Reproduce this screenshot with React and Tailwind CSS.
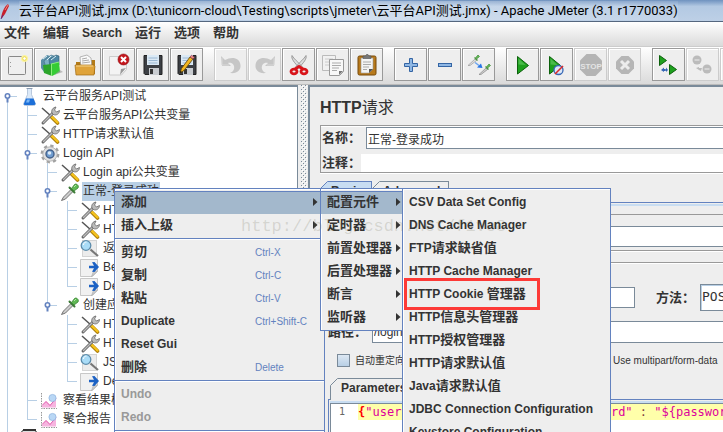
import React from "react";

const CJK = /([\u3000-\u9fff\uff00-\uffef]+)/;

/* Splits a label so that Chinese runs get the larger menu size. */
function Label({ children }) {
  return children.split(CJK).map((part, i) =>
    CJK.test(part) ? (
      <span key={i} className="text-[13px]">{part}</span>
    ) : (
      <React.Fragment key={i}>{part}</React.Fragment>
    )
  );
}

/* ---------- toolbar icons ---------- */

const Svg = ({ children, size = 24 }) => (
  <svg width={size} height={size} viewBox={`0 0 ${size} ${size}`} aria-hidden="true">
    {children}
  </svg>
);

const NewIcon = () => (
  <Svg>
    <rect x="3.5" y="3.500" width="17" height="18" rx="1" fill="#efefef" stroke="#888" />
    <path d="M5.500 9v8" stroke="#999" strokeDasharray="1 3" />
    <circle cx="19.500" cy="5.500" r="3.500" fill="#fbf3a0" />
    <circle cx="19.500" cy="5.500" r="1.800" fill="#fff" stroke="#ecd94c" />
  </Svg>
);
const TemplatesIcon = () => (
  <Svg>
    <path d="M2 7l6-5 3 1v13l-6 3-3-4z" fill="#5b8fa8" />
    <path d="M5 8l7-6 3 1v12l-7 3z" fill="#7cb0c6" stroke="#3f6f88" strokeWidth=".6" />
    <path d="M10 6l7-4 3 1v9l-9 3z" fill="#4d87a3" stroke="#2f5c74" strokeWidth=".6" />
    <path d="M4 6l4-3M8 7l4-4M12 7l5-4" stroke="#d9edf5" />
    <path d="M4 12l9-1v12l-8-3z" fill="#2ba52b" />
    <path d="M12 11l8-2 1 10-8 4z" fill="#35cc35" />
    <path d="M12 11l8-2M12.500 11v12" stroke="#8bee7c" />
    <path d="M21 17l3 2-9 3z" fill="#999" opacity=".6" />
  </Svg>
);
const OpenIcon = () => (
  <Svg>
    <path d="M3 9h6l2-2h11v14H3z" fill="#b27a18" />
    <path d="M7 4l7-2 4 3 1 10H8z" fill="#fafafa" stroke="#999" strokeWidth=".7" />
    <path d="M9 6l5-1M9 8l7-1M9 10l8-1" stroke="#aaa" />
    <path d="M2 12h19l1 1-1 9H3z" fill="#dfa33a" stroke="#a26c14" strokeWidth=".7" />
    <path d="M3 13h17" stroke="#f6d48b" />
  </Svg>
);
const CloseIcon = () => (
  <Svg>
    <path d="M2.500 3.500h17v13l-5 5.500h-12z" fill="#f3f3f3" stroke="#ccc" />
    <path d="M19 15l-6 7 1-6z" fill="#999" />
    <circle cx="16.500" cy="6.500" r="5.500" fill="#c4161c" stroke="#8d0d12" strokeWidth=".6" />
    <path d="M14 4l5 5M19 4l-5 5" stroke="#fff" strokeWidth="2" />
  </Svg>
);
const Floppy = () => (
  <>
    <path d="M3 2.500h18v19H4l-1-1z" fill="#3c3f44" stroke="#222" />
    <rect x="6" y="2" width="12" height="10" fill="#dbe9f5" />
    <path d="M7.500 5h9M7.500 7.500h9M7.500 10h9" stroke="#9bb8d3" />
    <rect x="8" y="15" width="10" height="7" fill="#c9ccd0" />
    <rect x="9" y="16" width="3" height="5" fill="#333" />
  </>
);
const SaveIcon = () => <Svg><Floppy /></Svg>;
const SaveAsIcon = () => (
  <Svg>
    <Floppy />
    <path d="M5 20l1.500-4.500L15 4l3 2L9 17.500z" fill="#f2b51e" stroke="#5c4308" strokeWidth=".8" />
    <path d="M15 4l1.500-1.800 3 2L18 6z" fill="#e9908a" stroke="#713" strokeWidth=".5" />
    <path d="M5 20l.5-2 1.500 1z" fill="#111" />
  </Svg>
);
const UndoIcon = () => (
  <Svg>
    <path d="M2 3l1 10h9l-3-3c4-1 7 2 6 6-.5 2-2 3-4 4 7 1 11-3 10.500-8C21 5 13 3 6 7z" fill="#c6c6c6" />
    <path d="M3 5v7h7" stroke="#d8d8d8" fill="none" />
  </Svg>
);
const RedoIcon = () => (
  <Svg>
    <path d="M22 3l-1 10h-9l3-3c-4-1-7 2-6 6 .5 2 2 3 4 4-7 1-11-3-10.500-8C3 5 11 3 18 7z" fill="#c6c6c6" />
    <path d="M21 5v7h-7" stroke="#d8d8d8" fill="none" />
  </Svg>
);
const CutIcon = () => (
  <Svg>
    <path d="M5 2.500c-1 3 2 7 8 13l2-2C11 9 7 6 5 2.500zM19 2.500c1 3-2 7-8 13l-2-2C13 9 17 6 19 2.500z" fill="#ddd" stroke="#888" strokeWidth=".8" />
    <ellipse cx="7" cy="18.500" rx="3" ry="2.300" fill="none" stroke="#d8141a" strokeWidth="2.800" />
    <ellipse cx="17" cy="18.500" rx="3" ry="2.300" fill="none" stroke="#d8141a" strokeWidth="2.800" />
    <path d="M8 16l4-2.500 4 2.500" stroke="#d8141a" strokeWidth="2.800" fill="none" />
  </Svg>
);
const CopyIcon = () => (
  <Svg>
    <path d="M1.500 2.500h13v15h-13z" fill="#f1f1f1" stroke="#bbb" />
    <path d="M4 6h8M4 9h4M4 12h4" stroke="#ccc" />
    <path d="M8.500 6.500h14v12l-4 4h-10z" fill="#f8f8f8" stroke="#999" />
    <path d="M11 10h9M11 12.500h9M11 15h7M11 17.500h5" stroke="#aaa" />
    <path d="M22 18l-4 4v-4z" fill="#777" />
  </Svg>
);
const PasteIcon = () => (
  <Svg>
    <rect x="3" y="3" width="18" height="19" rx="1.500" fill="#b87a1c" stroke="#76490a" />
    <path d="M6 5h12v11l-4 4H6z" fill="#f4f4f4" stroke="#999" strokeWidth=".6" />
    <path d="M8 5.500V3h2.500l1-1.500h1.500L14 3h2v2.500z" fill="#777" stroke="#555" strokeWidth=".6" />
    <path d="M8 9h8M8 11.500h8M8 14h6M8 16.500h4" stroke="#aaa" />
    <path d="M18 16l-4 4v-4z" fill="#555" />
  </Svg>
);
const PlusIcon = () => (
  <Svg>
    <path d="M10.500 5.500h3v5h5v3h-5v5h-3v-5h-5v-3h5z" fill="#8fb7e4" stroke="#3465a4" />
  </Svg>
);
const MinusIcon = () => (
  <Svg>
    <rect x="5.500" y="10.500" width="13" height="3" fill="#8fb7e4" stroke="#3465a4" />
  </Svg>
);
const ToggleIcon = () => (
  <Svg>
    <path d="M1 12.500l7-6.500 1.500 1.500L3 12.500z" fill="#ddd" stroke="#999" strokeWidth=".7" />
    <path d="M7.500 4.500l3 3" stroke="#4a9440" strokeWidth="1.200" />
    <path d="M8.500 5l2.500-3 1.500 1.500-3 2.500z" fill="#66b95c" stroke="#4a9440" strokeWidth=".8" />
    <path d="M12 21.500l7-6.500 1.500 1.500-6.500 5z" fill="#ccc" stroke="#888" strokeWidth=".7" />
    <path d="M18.500 13.500l3 3" stroke="#4a9440" strokeWidth="1.200" />
    <path d="M19.500 14l2.500-3 1.500 1.500-3 2.500z" fill="#66b95c" stroke="#4a9440" strokeWidth=".8" />
    <path d="M8 9.500l4 3" stroke="#6ba4f0" strokeWidth="1.500" />
    <path d="M15.500 15l-5.500-.5 4-4z" fill="#2574e6" />
  </Svg>
);
const StartIcon = () => (
  <Svg>
    <path d="M6.500 3.500v17.500l11-8.500z" fill="#1ea01e" stroke="#0c610c" />
    <path d="M7.500 5.500v6l7 .5z" fill="#4aba4a" />
  </Svg>
);
const StartNoTimersIcon = () => (
  <Svg>
    <path d="M4.500 3.500v17.500l11-8.500z" fill="#1ea01e" stroke="#0c610c" />
    <path d="M5.500 5.500v6l7 .5z" fill="#4aba4a" />
    <circle cx="13.500" cy="17" r="4.500" fill="#dbe6f6" stroke="#3566b5" strokeWidth="1.300" />
    <path d="M10 21l8-8" stroke="#d92b2b" strokeWidth="1.600" />
  </Svg>
);
const StopIcon = () => (
  <Svg>
    <path d="M7.500 1h9L23 7.500v9L16.500 23h-9L1 16.500v-9z" fill="#b4b4b4" />
    <text x="12" y="15.500" textAnchor="middle" fontSize="8" fontWeight="bold" fontFamily="Liberation Sans, sans-serif" fill="#e4e4e4">STOP</text>
  </Svg>
);
const ShutdownIcon = () => (
  <Svg>
    <path d="M8.500 3h7L21 8.500v7L15.500 21h-7L3 15.500v-7z" fill="#b6b6b6" />
    <path d="M8 8l8 8M16 8l-8 8" stroke="#ececec" strokeWidth="3" />
  </Svg>
);
const RemoteStartIcon = () => (
  <Svg>
    <path d="M2.500 2.500v10l7-5z" fill="#1ea01e" stroke="#0c610c" />
    <path d="M12.500 11.500v10l7-5z" fill="#1ea01e" stroke="#0c610c" />
    <path d="M4 17l3-2.500v1.500h1v2H7V19zM11 17l-2-2.500V19z" fill="#3566b5" />
    <path d="M7 17h3" stroke="#3566b5" strokeWidth="1.500" />
  </Svg>
);
const RemoteStopIcon = () => (
  <Svg>
    <circle cx="6" cy="7" r="4.500" fill="#bbb" />
    <circle cx="16" cy="16" r="4.500" fill="#bbb" />
    <path d="M3.500 7h5M13.500 16h5" stroke="#ddd" strokeWidth="1.500" />
    <path d="M5 15l3-1v1h3l-1 3-2-1z" fill="#bbb" />
  </Svg>
);

const TOOLBAR = [
  [
    ["New", NewIcon], ["Templates", TemplatesIcon], ["Open", OpenIcon],
    ["Close", CloseIcon], ["Save", SaveIcon], ["Save as", SaveAsIcon],
  ],
  [
    ["Undo", UndoIcon, true], ["Redo", RedoIcon, true], ["Cut", CutIcon],
    ["Copy", CopyIcon], ["Paste", PasteIcon],
  ],
  [["Expand all", PlusIcon], ["Collapse all", MinusIcon], ["Toggle", ToggleIcon]],
  [
    ["Start", StartIcon], ["Start no pauses", StartNoTimersIcon],
    ["Stop", StopIcon, true], ["Shutdown", ShutdownIcon, true],
  ],
  [["Remote start all", RemoteStartIcon], ["Remote stop all", RemoteStopIcon, true], ["Remote shutdown all", RemoteStopIcon, true]],
];

/* ---------- tree icons ---------- */

const FlaskIcon = () => (
  <Svg size={20}>
    <path d="M7.500 1.500h4v6l4 9.500c0 1-1 1.500-2 1.500h-8c-1 0-2-.5-2-1.500l4-9.500z" fill="#dbe9f8" stroke="#a9bdd6" strokeWidth=".8" />
    <path d="M6 11.500h7.500l2 5c0 1-1 1.500-2 1.500h-8c-1 0-2-.5-1.500-1.500z" fill="#1c6fd8" />
    <path d="M7 12.500h3l-1 3H6z" fill="#78b5f5" />
    <path d="M6.500 1.500h6" stroke="#8a9bb0" />
  </Svg>
);
const ToolsIcon = () => (
  <Svg size={20}>
    <path d="M2 2l9 8" stroke="#555" strokeWidth="1.500" />
    <path d="M11 10.500l6.500 6.500" stroke="#a87a08" strokeWidth="3.600" strokeLinecap="round" />
    <path d="M11 10l6.500 6.500" stroke="#f5c21c" strokeWidth="2.400" strokeLinecap="round" />
    <path d="M3 17L13 7" stroke="#666" strokeWidth="3" strokeLinecap="round" />
    <path d="M3.500 16.500L13 7" stroke="#bbb" strokeWidth="1.400" strokeLinecap="round" />
    <path d="M12 7c-1-3 1-5.500 4-6l-1.500 3 2 2 3-1.500c0 3-3 5.500-6 4z" fill="#bbb" stroke="#666" strokeWidth=".8" />
  </Svg>
);
const GearIcon = () => (
  <Svg size={20}>
    <circle cx="10" cy="10" r="8" fill="none" stroke="#a2a2a2" strokeWidth="2.800" strokeDasharray="3.200 3.083" />
    <circle cx="10" cy="10" r="7.200" fill="#e0e0e0" stroke="#aaa" strokeWidth=".8" />
    <circle cx="10" cy="10" r="4" fill="#6f9ccf" stroke="#44618a" strokeWidth="1.400" />
    <circle cx="9.500" cy="9" r="1.800" fill="#dceaf8" />
  </Svg>
);
const DropperIcon = () => (
  <Svg size={20}>
    <path d="M1.500 18.500l2-3.500L11 7.500l2 2L5.500 17z" fill="#ccc" stroke="#666" strokeWidth=".9" />
    <path d="M9.500 5.500l5 5" stroke="#3b7a36" strokeWidth="2" strokeLinecap="round" />
    <path d="M11.500 6.500l3-4c1.500-1.500 5 1 3.500 3.500l-4 3z" fill="#5fb954" stroke="#3b8433" strokeWidth=".8" />
    <path d="M14 5l2-2" stroke="#b2e6a8" />
  </Svg>
);
const LensIcon = () => (
  <Svg size={20}>
    <rect x="2.500" y="1.500" width="14" height="16" fill="#ececec" stroke="#ccc" strokeWidth=".8" />
    <path d="M10.500 10.500l7.500 6.500" stroke="#777" strokeWidth="2.200" />
    <circle cx="6" cy="6.500" r="4.800" fill="#a9dcf7" stroke="#5d8cab" strokeWidth="1.300" />
    <path d="M3.500 6c0-2 1.500-3 3-3" stroke="#fff" fill="none" />
  </Svg>
);
const PostIcon = () => (
  <Svg size={20}>
    <path d="M.5 1.500h17v12l-5 5H.5z" fill="#f1f1f1" stroke="#bbb" strokeWidth=".8" />
    <path d="M17.500 13l-6 5.500 2-5z" fill="#ccc" stroke="#aaa" strokeWidth=".6" />
    <path d="M9 7.800h5l-2-3.500 2.500-.3 4.500 5-4.500 5-2.500-.3 2-3.500H9z" fill="#1d62c4" />
  </Svg>
);
const GraphIcon = () => (
  <Svg size={20}>
    <path d="M2 16.500V15l4-5 4 4 6-7v9.500z" fill="#f6b4df" />
    <path d="M2 14.500l4-4 4 4 6-7" stroke="#e25bad" fill="none" />
    <circle cx="12.500" cy="7" r="3.600" fill="#b9d7f5" stroke="#8ab0dc" strokeWidth=".7" />
    <path d="M1.500 2v15.500H17" stroke="#999" strokeDasharray="1.500 1" fill="none" />
  </Svg>
);
const BenchIcon = () => (
  <Svg size={20}>
    <rect x="1.500" y="1.500" width="15" height="16" rx="2" fill="#ddd" stroke="#444" />
    <path d="M4 2v-1h11v1" stroke="#333" strokeWidth="2" fill="none" />
  </Svg>
);

/* Guides hold one letter per 20px column: | through, + branch, L last branch, o/e branch with handle (e = last), O root. */
const TREE = [
  ["O", FlaskIcon, "云平台服务API测试"],
  ["|+", ToolsIcon, "云平台服务API公共变量"],
  ["|+", ToolsIcon, "HTTP请求默认值"],
  ["|o", GearIcon, "Login API"],
  ["||+", ToolsIcon, "Login api公共变量"],
  ["||o", DropperIcon, "正常-登录成功", true],
  ["|||+", ToolsIcon, "HTTP请求默认值"],
  ["|||+", ToolsIcon, "HTTP信息头管理器"],
  ["|||+", LensIcon, "返回码断言"],
  ["|||+", PostIcon, "BeanShell PostProcessor"],
  ["|||L", PostIcon, "Debug PostProcessor"],
  ["||e", DropperIcon, "创建应用"],
  ["|| +", ToolsIcon, "HTTP请求默认值"],
  ["|| +", ToolsIcon, "HTTP信息头管理器"],
  ["|| +", LensIcon, "JSON断言"],
  ["|| L", PostIcon, "Debug PostProcessor"],
  ["|+", GraphIcon, "察看结果树"],
  ["|L", GraphIcon, "聚合报告"],
  ["L", BenchIcon, ""],
];

function Guide({ kind }) {
  const handle = "Ooe".includes(kind);
  const up = "|+Loe".includes(kind);
  const down = "|+oO".includes(kind);
  return (
    <svg width="20" height="19" viewBox="0 0 20 19" className="shrink-0" aria-hidden="true">
      {up && <path d="M7.500 0v10" stroke="#b8cfe5" />}
      {down && <path d="M7.500 9v10" stroke="#b8cfe5" />}
      {kind !== "|" && kind !== " " && <path d="M8 9.500h9" stroke="#b8cfe5" />}
      {handle && (
        <>
          <circle cx="7.500" cy="9" r="2.200" fill="#fff" stroke="#6382bf" strokeWidth="1.600" />
          <path d="M7.500 11.500v4" stroke="#6382bf" strokeWidth="2" />
        </>
      )}
    </svg>
  );
}

function Tree() {
  return (
    <ul className="text-[12px] leading-[19px]">
      {TREE.map(([guides, Icon, text, selected], i) => (
        <li key={i} className="flex h-[19px] whitespace-nowrap">
          {[...guides].map((k, j) => <Guide key={j} kind={k} />)}
          <span className="flex h-[19px] w-5 shrink-0 items-center"><Icon /></span>
          <span className={selected ? "ml-0.5 bg-[#b8cfe5] px-px" : "pl-[3px]"}>{text}</span>
        </li>
      ))}
    </ul>
  );
}

/* ---------- menus ---------- */

function Item({ children, shortcut, arrow, active, disabled }) {
  return (
    <button
      type="button"
      role="menuitem"
      disabled={disabled}
      className={
        "flex h-[23px] w-full items-center border-t pb-0.5 pl-1.5 text-left font-bold whitespace-nowrap " +
        (active ? "border-[#6382bf] bg-[#a3b8cc]" : "border-transparent") +
        (disabled ? " text-[#999]" : "")
      }
    >
      <span className="flex-1"><Label>{children}</Label></span>
      {shortcut && <span className="w-[69px] text-[10px] font-normal text-[#6382bf]">{shortcut}</span>}
      {arrow && (
        <svg width="5" height="8" viewBox="0 0 5 8" className="mr-1.5" aria-hidden="true">
          <path d="M0 0l4.500 4L0 8z" fill="#333" />
        </svg>
      )}
    </button>
  );
}

const Separator = () => (
  <div className="h-1 pt-px" role="separator">
    <div className="h-0.5 border-t border-b border-t-[#6382bf] border-b-white" />
  </div>
);

const menuBox = "absolute border border-[#6382bf] bg-[#eee] pt-0.5 shadow-[inset_1px_1px_0_#fff]";

const CONFIG_ITEMS = [
  "CSV Data Set Config", "DNS Cache Manager", "FTP请求缺省值", "HTTP Cache Manager",
  "HTTP Cookie 管理器", "HTTP信息头管理器", "HTTP授权管理器", "HTTP请求默认值",
  "Java请求默认值", "JDBC Connection Configuration", "Keystore Configuration",
];

function Menus() {
  return (
    <>
      <div role="menu" className={menuBox + " left-[114px] top-[188px] w-[211px]"}>
        <Item arrow active>添加</Item>
        <Item arrow>插入上级</Item>
        <Separator />
        <Item shortcut="Ctrl-X">剪切</Item>
        <Item shortcut="Ctrl-C">复制</Item>
        <Item shortcut="Ctrl-V">粘贴</Item>
        <Item shortcut="Ctrl+Shift-C">Duplicate</Item>
        <Item>Reset Gui</Item>
        <Item shortcut="Delete">删除</Item>
        <Separator />
        <Item disabled>Undo</Item>
        <Item disabled>Redo</Item>
        <Separator />
      </div>
      <div role="menu" className={menuBox + " left-[320px] top-[188px] w-[88px] pb-px"}>
        <Item arrow active>配置元件</Item>
        <Item arrow>定时器</Item>
        <Item arrow>前置处理器</Item>
        <Item arrow>后置处理器</Item>
        <Item arrow>断言</Item>
        <Item arrow>监听器</Item>
      </div>
      <div role="menu" className={menuBox + " left-[402px] top-[188px] w-[209px]"}>
        {CONFIG_ITEMS.map((t) => <Item key={t}>{t}</Item>)}
      </div>
      <div className="absolute left-[404px] top-[278px] h-8 w-[136px] border-3 border-[#fd3a37]" />
      <div className="pointer-events-none absolute left-[241px] top-[215px] font-['Liberation_Mono',monospace] text-[17px] leading-6 text-[#6b6b50]/20">
        http://blog.csdn.net/f1ve8
      </div>
    </>
  );
}

/* ---------- right pane ---------- */

function Tab({ children, active }) {
  const line = active ? "#6382bf" : "#7a8a99";
  const fill = active ? "#c8ddf2" : "#eee";
  return (
    <button type="button" role="tab" aria-selected={!!active} className="flex h-[22px] font-bold">
      <svg width="8" height="22" viewBox="0 0 8 22" aria-hidden="true">
        <path d="M.5 22V7.500L7.500.5H8V22z" fill={fill} />
        <path d="M.5 22V7.500L7.500.5H8" fill="none" stroke={line} />
      </svg>
      <span
        className={
          "flex h-full items-center border-t border-r pr-2 pb-1 pl-[3px] " +
          (active ? "border-[#6382bf] bg-[#c8ddf2]" : "border-[#7a8a99] bg-[#eee]")
        }
      >
        {children}
      </span>
    </button>
  );
}

const field = "border border-[#7a8a99] bg-white outline-none";
const caption = "shrink-0 text-[13px] leading-4 font-bold whitespace-nowrap";

function RequestPane() {
  return (
    <section className="min-w-0 flex-1 overflow-hidden border-t-2 border-l-2 border-[#7a8a99] pl-2.5">
      <h1 className="flex h-[38px] items-center pt-1 text-[16px] font-bold">
        HTTP<span className="font-normal">请求</span>
      </h1>
      <div className="border border-r-0 border-[#999] pl-px shadow-[0_1px_0_#fff,inset_0_1px_0_#fff]">
        <div className="flex items-center pt-px">
          <label htmlFor="name" className={caption + " w-11"}>名称：</label>
          <input id="name" defaultValue="正常-登录成功" className={field + " h-[22px] min-w-0 flex-1 border-r-0 px-px"} />
        </div>
        <div className="flex items-center pt-[5px]">
          <label htmlFor="comment" className={caption + " w-[39px]"}>注释：</label>
          <input id="comment" className="h-[18px] min-w-0 flex-1 bg-white outline-none" />
        </div>
      </div>

      <div role="tablist" className="mt-2 flex">
        <Tab active>Basic</Tab>
        <Tab>Advanced</Tab>
      </div>
      <div className="-mt-px border-t border-[#6382bf] pt-px">
        <div className="border-t-2 border-[#c8ddf2] pt-2">
          <div className="border-t border-b border-[#999] pt-[11px] pb-[3px] shadow-[0_1px_0_#fff]">
            <input aria-label="服务器名称或IP" className={field + " block h-[21px] w-full border-r-0"} />
          </div>
          <div className="mt-[11px] border-t border-[#999] pt-[21px] pl-2 shadow-[inset_0_1px_0_#fff]">
            <div className="flex items-center">
              <label htmlFor="protocol" className={caption + " w-9"}>协议</label>
              <input id="protocol" className={field + " h-[21px] w-[271px] shrink-0"} />
              <label htmlFor="method" className={caption + " ml-[21px] w-11"}>方法：</label>
              <select id="method" className="h-[27px] w-24 shrink-0 appearance-none border border-[#7a8a99] bg-white px-px pb-0.5 font-['DejaVu_Sans_Mono',monospace] text-[13px] shadow-[inset_1px_1px_0_#b8cfe5]">
                <option>POST</option>
              </select>
            </div>
            <div className="mt-2.5 flex items-center">
              <label htmlFor="path" className={caption + " w-11"}>路径：</label>
              <input id="path" defaultValue="/login" className={field + " h-[22px] min-w-0 flex-1 border-r-0 px-px"} />
            </div>
            <div className="mt-2.5 flex h-[14px] items-center pl-[9px] text-[10px] whitespace-nowrap">
              <label className="flex w-[276px] shrink-0 items-center gap-[5px]">
                <input type="checkbox" className="size-[13px] appearance-none border border-[#7a8a99] bg-linear-to-b from-[#dde8f3] to-[#b8cfe5]" />
                自动重定向
              </label>
              <span>Use multipart/form-data</span>
            </div>
            <div role="tablist" className="mt-[11px] ml-0.5 flex">
              <Tab>Parameters</Tab>
            </div>
            <div className="-mt-px border-t border-l border-[#6382bf] pt-px pl-px">
              <div className="flex h-10 border-t-2 border-[#c8ddf2] font-['DejaVu_Sans_Mono',monospace] leading-4">
                <div className="w-7 shrink-0 border-t border-l border-[#7a8a99] bg-white pl-2 text-[10px] leading-4 text-[#666]">1</div>
                <div className="min-w-0 flex-1 border-t border-[#7a8a99] bg-white">
                  <pre className="bg-[#ffffaa] font-['DejaVu_Sans_Mono',monospace] text-[#dc009c]">
                    <b className="text-[#ff0000]">{"{"}</b>"username"<i className="text-[#804040] not-italic"> : </i>
                    {'"${username}"'}<i className="text-[#804040] not-italic">,</i>{'"password"'}
                    <i className="text-[#804040] not-italic"> : </i>{'"${password}"}'}
                  </pre>
                </div>
              </div>
            </div>
          </div>
        </div>
      </div>
    </section>
  );
}

/* Stippled grip of the split pane. */
function Divider() {
  return (
    <div className="w-2.5 shrink-0 pl-[3px]">
      <svg width="6" height="100%" aria-hidden="true">
        <defs>
          <pattern id="grip" width="4" height="4" patternUnits="userSpaceOnUse">
            <path d="M0 0h1v1H0zM2 2h1v1H2z" fill="#7a8a99" />
            <path d="M1 1h1v1H1zM3 3h1v1H3z" fill="#fff" />
          </pattern>
        </defs>
        <rect width="6" height="100%" fill="url(#grip)" />
      </svg>
    </div>
  );
}

/* ---------- application ---------- */

export default function App() {
  return (
    <div className="relative flex h-screen flex-col overflow-hidden bg-[#eee] font-['Liberation_Sans','Noto_Sans_CJK_SC',sans-serif] text-[12px] text-[#333]">
      <header className="flex h-[22px] shrink-0 items-center gap-1.5 overflow-hidden border-b border-[#55677f] bg-linear-to-b from-[#6f92bf] via-[#b3c9e3] via-30% to-[#bdd0e6] font-['Roboto','Noto_Sans_CJK_SC',sans-serif] text-[13px] whitespace-nowrap text-black">
        <svg width="13" height="20" viewBox="0 0 13 20" className="shrink-0" aria-hidden="true">
          <path d="M1 17C2 11 4 6 8 3l1 2-4 8-3 4z" fill="#c8202c" />
          <path d="M5 9l3-5" stroke="#f08a7a" />
          <path d="M1 18l2-4" stroke="#5b2a7c" />
        </svg>
        <span className="bg-linear-to-r from-white/10 via-white/35 to-white/10">
          云平台API测试.jmx (D:\tunicorn-cloud\Testing\scripts\jmeter\云平台API测试.jmx) - Apache JMeter (3.1 r1770033)
        </span>
      </header>

      <nav className="flex h-[25px] shrink-0 items-center gap-[13px] border-b border-[#ccc] bg-linear-to-b from-white to-[#dadada] pb-0.5 pl-1 text-[13px] font-bold">
        <button type="button">文件</button>
        <button type="button">编辑</button>
        <button type="button" className="text-[12px]">Search</button>
        <button type="button">运行</button>
        <button type="button">选项</button>
        <button type="button">帮助</button>
      </nav>

      <div className="flex h-[38px] shrink-0 gap-[11px] overflow-hidden border-b border-[#bbb] bg-linear-to-b from-white to-[#dadada] pt-px">
        {TOOLBAR.map((group, i) => (
          <div key={i} className="flex shrink-0 gap-px">
            {group.map(([name, Icon, off]) => (
              <button
                key={name}
                type="button"
                aria-label={name}
                disabled={off}
                className={
                  "flex size-[33px] items-center justify-center border bg-[#eee] shadow-[inset_1px_1px_0_#fff] " +
                  (off ? "border-[#ccc]" : "border-[#999]")
                }
              >
                <Icon />
              </button>
            ))}
          </div>
        ))}
      </div>

      <main className="flex min-h-0 flex-1">
        <aside className="w-[298px] shrink-0 overflow-hidden border-t-2 border-r border-[#7a8a99] bg-white">
          <Tree />
        </aside>
        <Divider />
        <RequestPane />
      </main>

      <Menus />
    </div>
  );
}
